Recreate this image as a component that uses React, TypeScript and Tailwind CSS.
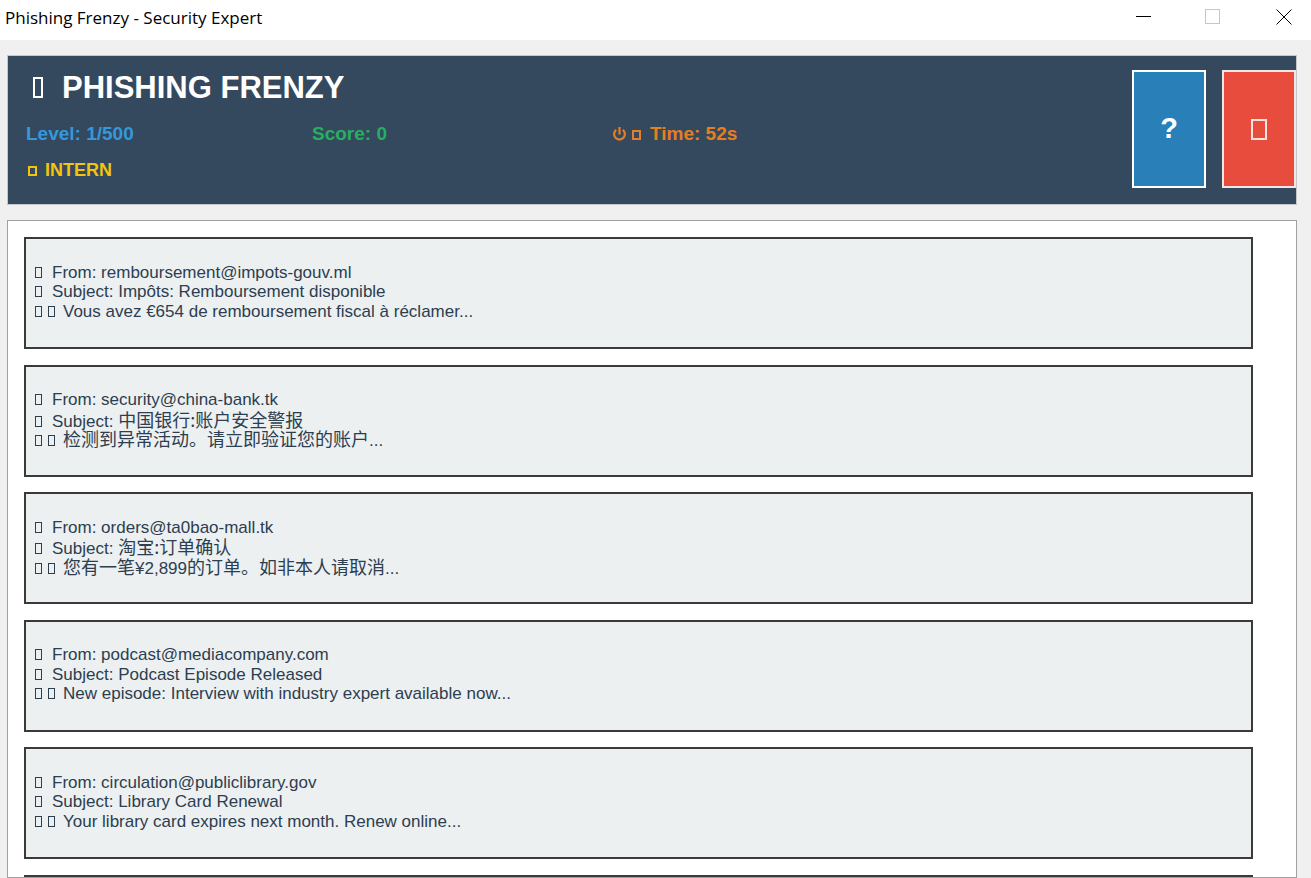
import React from "react";

const CJK = ({ children }: { children: React.ReactNode }) => (
  <span className="text-[18px] leading-[19.5px] [font-family:'Noto_Sans_CJK_SC','Liberation_Sans',sans-serif]">{children}</span>
);

const CardTofu = ({ className }: { className: string }) => (
  <span className={"inline-block w-[7px] h-[11px] border border-[#2c3e50] " + className} />
);

type Email = { from: string; subject: React.ReactNode; body: React.ReactNode };

const emails: Email[] = [
  {
    from: "remboursement@impots-gouv.ml",
    subject: "Impôts: Remboursement disponible",
    body: "Vous avez €654 de remboursement fiscal à réclamer...",
  },
  {
    from: "security@china-bank.tk",
    subject: <CJK>中国银行:账户安全警报</CJK>,
    body: (
      <>
        <CJK>检测到异常活动。请立即验证您的账户</CJK>...
      </>
    ),
  },
  {
    from: "orders@ta0bao-mall.tk",
    subject: <CJK>淘宝:订单确认</CJK>,
    body: (
      <>
        <CJK>您有一笔</CJK>¥2,899<CJK>的订单。如非本人请取消</CJK>...
      </>
    ),
  },
  {
    from: "podcast@mediacompany.com",
    subject: "Podcast Episode Released",
    body: "New episode: Interview with industry expert available now...",
  },
  {
    from: "circulation@publiclibrary.gov",
    subject: "Library Card Renewal",
    body: "Your library card expires next month. Renew online...",
  },
];

function EmailCard({ e }: { e?: Email }) {
  return (
    <div className="h-[112px] shrink-0 border-2 border-[#3a3a3a] bg-[#ecf0f1] pl-[9px] pt-[23.5px] text-[17px] leading-[19.5px] text-[#2c3e50] whitespace-nowrap">
      {e && (
        <>
          <div className="h-[19.5px]">
            <CardTofu className="mr-[10px]" />
            From: {e.from}
          </div>
          <div className="h-[19.5px]">
            <CardTofu className="mr-[10px]" />
            Subject: {e.subject}
          </div>
          <div className="h-[19.5px]">
            <CardTofu className="mr-[6px]" />
            <CardTofu className="mr-[8px]" />
            {e.body}
          </div>
        </>
      )}
    </div>
  );
}

export default function App() {
  return (
    <div className="w-[1311px] h-[878px] overflow-hidden bg-[#f0f0f0] flex flex-col [font-family:'Liberation_Sans',Arial,sans-serif]">
      {/* Title bar */}
      <div className="h-[40px] shrink-0 bg-white flex items-start">
        <div className="pl-[5px] pt-[6px] text-[17px] leading-[24px] text-black [font-family:'Open_Sans','Noto_Sans',sans-serif] flex-1">
          Phishing Frenzy - Security Expert
        </div>
        <div className="flex items-start mr-[19px]">
          <div className="w-[15px] h-px bg-black mt-[16px]" />
          <div className="w-[15px] h-[15px] border border-[#c6c6c6] mt-[9px] ml-[54px]" />
          <svg width="16" height="16" viewBox="0 0 16 16" className="mt-[9px] ml-[56px]">
            <path d="M0.5 0.5 L15.5 15.5 M15.5 0.5 L0.5 15.5" stroke="#000" strokeWidth="1" />
          </svg>
        </div>
      </div>

      {/* Body */}
      <div className="flex-1 flex flex-col pl-[7px] pr-[14px] pt-[15px] min-h-0">
        {/* Header */}
        <div className="h-[150px] shrink-0 bg-[#34495e] border border-[#c4c8cc] flex items-start">
          <div className="flex-1 pl-[18px] pt-[16px]">
            <div className="h-[31px] text-[31px] leading-[31px] font-bold text-white flex items-baseline whitespace-nowrap">
              <span className="inline-block w-[10px] h-[21px] border-2 border-white ml-[7px] mr-[19px]" />
              PHISHING FRENZY
            </div>
            <div className="mt-[20px] h-[22px] text-[19px] leading-[22px] font-bold flex items-baseline whitespace-nowrap">
              <div className="w-[286px] text-[#3498db]">Level: 1/500</div>
              <div className="w-[300px] text-[#27ae60]">Score: 0</div>
              <div className="text-[#e67e22] flex items-baseline">
                <svg width="15" height="15" viewBox="0 0 15 15" className="self-center mr-[5px] mt-[-1px]">
                  <path d="M4.2 3.9 A5.4 5.4 0 1 0 10.8 3.9" fill="none" stroke="#e67e22" strokeWidth="2.2" />
                  <path d="M7.5 1 L7.5 8.5" stroke="#e67e22" strokeWidth="2.2" />
                </svg>
                <span className="inline-block w-[9px] h-[10px] border-2 border-[#e67e22] mr-[9px]" />
                Time: 52s
              </div>
            </div>
            <div className="mt-[14px] h-[22px] text-[18px] leading-[22px] font-bold text-[#f1c40f] flex items-baseline whitespace-nowrap">
              <span className="inline-block w-[9px] h-[10px] border-2 border-[#f1c40f] ml-[2px] mr-[8px]" />
              INTERN
            </div>
          </div>
          <div className="flex gap-[16px] mt-[14px]">
            <div className="w-[74px] h-[118px] bg-[#2980b9] border-2 border-white flex items-center justify-center text-white text-[29px] font-bold">
              ?
            </div>
            <div className="w-[74px] h-[118px] bg-[#e74c3c] border-2 border-[#f3e6e4] flex items-center justify-center">
              <span className="inline-block w-[16px] h-[21px] border-2 border-[#fbe4e0] mr-[1px]" />
            </div>
          </div>
        </div>

        {/* Email list */}
        <div className="mt-[15px] flex-1 min-h-0 bg-white border border-[#a0a0a0] overflow-hidden">
          <div className="pl-[16px] pt-[16px] w-[1245px] flex flex-col gap-[15.6px]">
            {emails.map((e, i) => (
              <EmailCard key={i} e={e} />
            ))}
            <EmailCard />
          </div>
        </div>
      </div>
    </div>
  );
}
